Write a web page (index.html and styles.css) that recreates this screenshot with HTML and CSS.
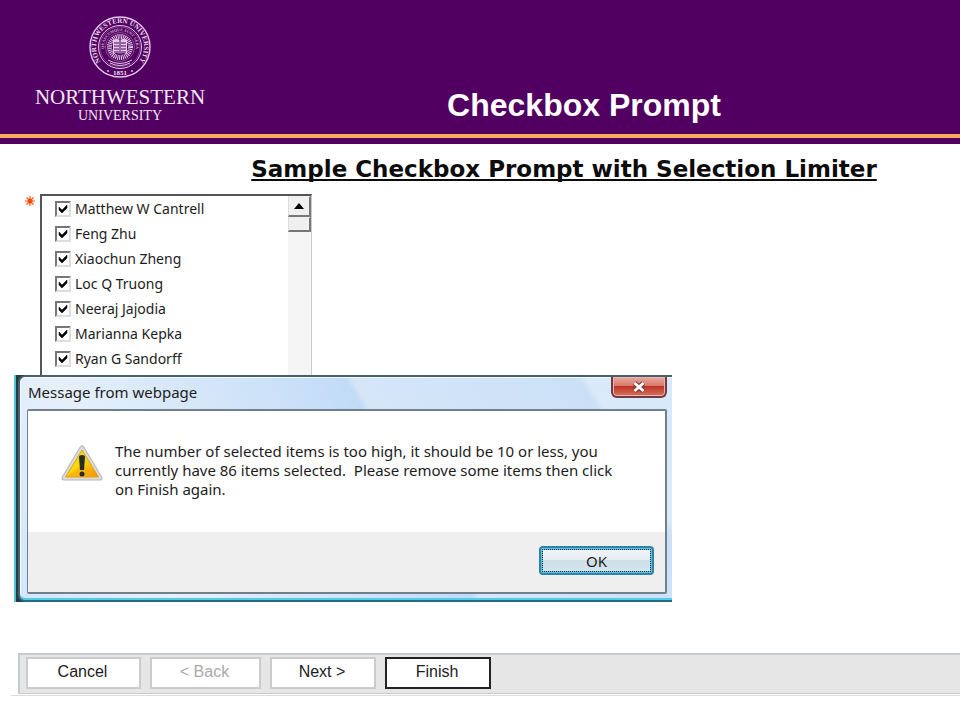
FILE: index.html
```
<!DOCTYPE html>
<html lang="en">
<head>
<meta charset="utf-8">
<meta name="viewport" content="width=device-width, initial-scale=1">
<title>Checkbox Prompt</title>
<link rel="stylesheet" href="styles.css">
</head>
<body>
<header class="banner">
  <div class="brand">
    <svg class="seal" viewBox="0 0 62 62" role="img" aria-label="University seal">
      <defs>
        <path id="outer-arc" d="M17 50.500 A24 24 0 1 1 45 50.500"/>
        <path id="inner-arc" d="M18.500 41 A16 16 0 1 1 43.500 41"/>
      </defs>
      <g fill="none" stroke="#e3c9e8">
        <circle cx="31" cy="31" r="30" stroke-width="1.400"/>
        <circle cx="31" cy="31" r="21.500" stroke-width="1"/>
        <circle cx="31" cy="31" r="20" stroke-width=".5" opacity=".6"/>
        <circle cx="31" cy="31" r="14.500" stroke-width=".6" opacity=".6"/>
        <circle cx="31" cy="31" r="10.500" stroke-width="5" stroke-dasharray="1 .8"/>
        <path d="M19 44q12 7 24 0M21 47q10 5 20 0" stroke-width="1"/>
      </g>
      <path d="M24 24q4-2 7 0q3-2 7 0v14q-4-2-7 0q-3-2-7 0z" fill="#e3c9e8"/>
      <path d="M31 24v14M25 27h5M25 30h5M25 33h5M25 36h5M32 27h5M32 30h5M32 33h5M32 36h5" stroke="#510061" stroke-width="1"/>
      <g fill="#efdcf2" class="seal-text">
        <text font-size="7"><textPath href="#outer-arc" startOffset="50%" text-anchor="middle">NORTHWESTERN UNIVERSITY</textPath></text>
        <text font-size="4" opacity=".8"><textPath href="#inner-arc" startOffset="50%" text-anchor="middle">QUAECUMQUE SUNT VERA</textPath></text>
        <text font-size="7" x="31" y="59" text-anchor="middle">1851</text>
        <circle cx="19" cy="55" r=".9"/><circle cx="43" cy="55" r=".9"/>
      </g>
    </svg>
    <div class="brand-name">NORTHWESTERN</div>
    <div class="brand-sub">UNIVERSITY</div>
  </div>
  <h1 class="banner-title">Checkbox Prompt</h1>
</header>

<main class="page">
  <h2 class="prompt-title">Sample Checkbox Prompt with Selection Limiter</h2>

  <section class="prompt">
    <svg class="required" viewBox="0 0 10 10" role="img" aria-label="Required">
      <path d="M5 0v10M0 5h10M1.500 1.500l7 7M8.500 1.500l-7 7" stroke="#ff5a1e" stroke-width="1.200"/>
      <circle cx="5" cy="5" r="2.500" fill="#ff4a0a"/>
    </svg>
    <div class="list">
      <div class="options">
        <label class="option"><input type="checkbox" checked>Matthew W Cantrell</label>
        <label class="option"><input type="checkbox" checked>Feng Zhu</label>
        <label class="option"><input type="checkbox" checked>Xiaochun Zheng</label>
        <label class="option"><input type="checkbox" checked>Loc Q Truong</label>
        <label class="option"><input type="checkbox" checked>Neeraj Jajodia</label>
        <label class="option"><input type="checkbox" checked>Marianna Kepka</label>
        <label class="option"><input type="checkbox" checked>Ryan G Sandorff</label>
      </div>
      <div class="scrollbar">
        <button class="scroll-up" type="button" aria-label="Scroll up">
          <svg width="10" height="6" viewBox="0 0 10 6"><path d="M0 6L5 0l5 6z"/></svg>
        </button>
        <div class="thumb"></div>
      </div>
    </div>
  </section>

  <div class="dialog-edge">
  <section class="dialog" role="dialog" aria-labelledby="dialog-title">
    <div class="dialog-bar">
      <h3 class="dialog-title" id="dialog-title">Message from webpage</h3>
      <button class="close" type="button" aria-label="Close">
        <svg width="16" height="12" viewBox="0 0 16 12"><path d="M3.500 2l9 8M12.500 2l-9 8" stroke="#713638" stroke-width="5"/><path d="M3.500 2l9 8M12.500 2l-9 8" stroke="#fff" stroke-width="3"/></svg>
      </button>
    </div>
    <div class="dialog-body">
      <div class="message">
        <svg class="warning" viewBox="0 0 42 36" role="img" aria-label="Warning">
          <defs>
            <linearGradient id="amber" x1="0" y1="0" x2="1" y2="1">
              <stop offset="0" stop-color="#e9dc1c"/><stop offset=".5" stop-color="#fbd60c"/><stop offset="1" stop-color="#f58a08"/>
            </linearGradient>
          </defs>
          <path d="M21 3L39 33H3z" fill="#b5b5b5" stroke="#b5b5b5" stroke-width="5" stroke-linejoin="round"/>
          <path d="M21 3L39 33H3z" fill="#ddd" stroke="#ddd" stroke-width="3" stroke-linejoin="round"/>
          <path d="M21 5L37.500 32H4.500z" fill="url(#amber)" stroke="#d9a514" stroke-width="1" stroke-linejoin="round"/>
          <path d="M4.500 32L21 20l16.500 12z" fill="#f9a30b" opacity=".5"/>
          <path d="M18 12q0-2 3-2t3 2l-1 13h-4z" fill="#272c2b"/>
          <circle cx="21" cy="29" r="2.500" fill="#272c2b"/>
        </svg>
        <p class="message-text">The number of selected items is too high, it should be 10 or less, you<br>currently have 86 items selected.&nbsp; Please remove some items then click<br>on Finish again.</p>
      </div>
      <div class="dialog-actions">
        <button class="ok" type="button">OK</button>
      </div>
    </div>
  </section>
  </div>

  <footer class="footer">
    <nav class="wizard">
      <button class="step cancel" type="button">Cancel</button>
      <button class="step back" type="button" disabled>&lt; Back</button>
      <button class="step" type="button">Next &gt;</button>
      <button class="step finish" type="button">Finish</button>
    </nav>
  </footer>
</main>
</body>
</html>
```
FILE: styles.css
```
* { box-sizing: border-box; }

body {
  margin: 0;
  background: #fff;
  color: #1c1c1c;
  font-family: "Liberation Sans", Arial, sans-serif;
}

h1, h2, h3, p { margin: 0; }
button { font-family: inherit; }

/* Banner */
.banner {
  display: grid;
  grid-template-columns: 240px 1fr;
  background: linear-gradient(#ffa95c, #ffa95c) 0 100% / 100% 4px no-repeat #510061;
  padding: 16px 32px 4px 0;
  height: 138px;
  box-shadow: 0 6px 0 #510061;
}
.brand {
  display: flex;
  flex-direction: column;
  align-items: center;
  color: #f3e6f5;
  font-family: "Liberation Serif", "Times New Roman", serif;
}
.seal { width: 62px; height: 62px; }
.seal-text { font-family: "Liberation Serif", serif; font-weight: bold; }
.brand-name { margin-top: 8px; font-size: 21px; line-height: 22px; }
.brand-sub { font-size: 14px; line-height: 16px; }
.banner-title {
  align-self: end;
  padding-bottom: 11px;
  color: #fff;
  font-size: 32px;
  line-height: 36px;
  text-align: center;
}

/* Prompt */
.page { padding-top: 6px; }
.prompt-title {
  padding: 12px 0 12px 168px;
  color: #0c0c0c;
  font-family: "DejaVu Sans", Verdana, sans-serif;
  font-size: 23px;
  line-height: 26px;
  text-align: center;
  text-decoration: underline;
  text-decoration-thickness: 2px;
  text-underline-offset: 2px;
  text-decoration-skip-ink: none;
}
.prompt {
  display: flex;
  align-items: flex-start;
  gap: 5px;
  padding-left: 25px;
}
.required { width: 10px; height: 10px; margin-top: 2px; }
.list {
  display: flex;
  width: 272px;
  border: 2px solid #555;
  border-right: 1px solid #ccc;
  border-bottom: 0;
}
.options { flex: 1; padding: 0 0 4px 13px; }
.option {
  display: flex;
  align-items: center;
  gap: 4px;
  height: 25px;
  font-family: "Noto Sans", Tahoma, sans-serif;
  font-size: 14px;
}
.option input {
  appearance: none;
  width: 16px;
  height: 16px;
  margin: 0;
  border: 2px solid;
  border-color: #777 #ddd #ddd #777;
  background: #fff;
}
.option input:checked {
  background: url("data:image/svg+xml,%3Csvg xmlns='http://www.w3.org/2000/svg' viewBox='0 0 12 12'%3E%3Cpath d='M2 4l3 3 5-5v3l-5 5-3-3z' fill='%23000' stroke='%23000' stroke-width='.5'/%3E%3C/svg%3E") center / 12px 12px no-repeat #fff;
}
.scrollbar { width: 23px; background: #f5f5f5; }
.scroll-up, .thumb {
  display: flex;
  align-items: center;
  justify-content: center;
  width: 100%;
  border: 1px solid;
  border-color: #eee #777 #777 #ddd;
  border-width: 1px 2px 2px 1px;
  background: #f0f0f0;
}
.scroll-up { height: 21px; padding: 0; }
.thumb { height: 15px; }

/* Alert dialog */
.dialog-edge {
  width: calc(70% - 14px);
  margin-left: 14px;
  padding-left: 4px;
  background: linear-gradient(90deg, #6bc9dc 0, #3cc0d9 2px, #263a43 2px, #263a43 4px);
}
.dialog {
  padding: 0 5px 6px 7px;
  border: 2px solid #46606e;
  border-right: 0;
  border-bottom-color: #2b6b80;
  border-radius: 7px 0 0 7px;
  background: linear-gradient(60deg, #d3e6fa 0, #e6f0fb 20%, #c8dff8 52%, #c1dbf7 58%, #d5e6f9 59%, #cbe0f7 88%, #dbeafa 89%, #d6e8fa 100%);
  box-shadow: inset 0 -2px 0 #52cce6, inset 1px 1px 0 #f3f9ff;
}
.dialog-bar {
  display: flex;
  justify-content: space-between;
  align-items: flex-start;
  height: 32px;
}
.dialog-title {
  padding-left: 1px;
  font-family: "Noto Sans", "Segoe UI", sans-serif;
  font-size: 15px;
  font-weight: normal;
  line-height: 30px;
}
.close {
  display: grid;
  place-items: center;
  width: 56px;
  height: 21px;
  padding: 0;
  border: 2px solid #6c3b43;
  border-top: 0;
  border-radius: 0 0 6px 6px;
  background: linear-gradient(#e9aa9f, #d8796b 45%, #b93523 50%, #dc705d);
  box-shadow: inset 0 0 0 1px #eab5ac;
}
.dialog-body { border: 2px solid #70808c; border-width: 2px 2px 2px 1px; border-radius: 2px; background: #fff; }
.message {
  display: flex;
  align-items: flex-start;
  gap: 12px;
  height: 121px;
  padding: 31px 0 0 33px;
}
.warning { flex: none; width: 42px; height: 36px; margin-top: 3px; }
.message-text {
  font-family: "Noto Sans", "Segoe UI", sans-serif;
  font-size: 15px;
  line-height: 19px;
  white-space: nowrap;
}
.dialog-actions {
  display: flex;
  justify-content: flex-end;
  padding: 14px 11px 17px;
  background: #efefef;
}
.ok {
  width: 115px;
  height: 29px;
  padding: 0;
  border: 2px solid #2f82a8;
  border-radius: 4px;
  outline: 1px dotted #333;
  outline-offset: -4px;
  background: linear-gradient(#f2f6f8, #e4edf1 48%, #cfdfe7 50%, #d4e6ee);
  box-shadow: inset 0 0 0 2px #5dc3e4;
  color: #1c1c1c;
  font-family: "Noto Sans", "Segoe UI", sans-serif;
  font-size: 15px;
  line-height: 22px;
}

/* Wizard buttons */
.footer {
  margin: 51px 0 0 11px;
  padding: 0 0 1px 7px;
  border-bottom: 1px solid #ddd;
}
.wizard {
  display: flex;
  gap: 9px;
  padding: 2px 6px 4px;
  border: 1px solid #c6cbcf;
  border-width: 2px 0 1px 2px;
  background: #e6e6e6;
}
.step {
  width: 106px;
  height: 32px;
  padding: 0 2px 2px 0;
  border: 2px solid #ccc;
  background: #fff;
  color: #1c1c24;
  font-size: 16px;
}
.cancel { width: 115px; }
.back { width: 111px; }
.step:disabled { color: #aaa; }
.finish { border-color: #222; }
```
